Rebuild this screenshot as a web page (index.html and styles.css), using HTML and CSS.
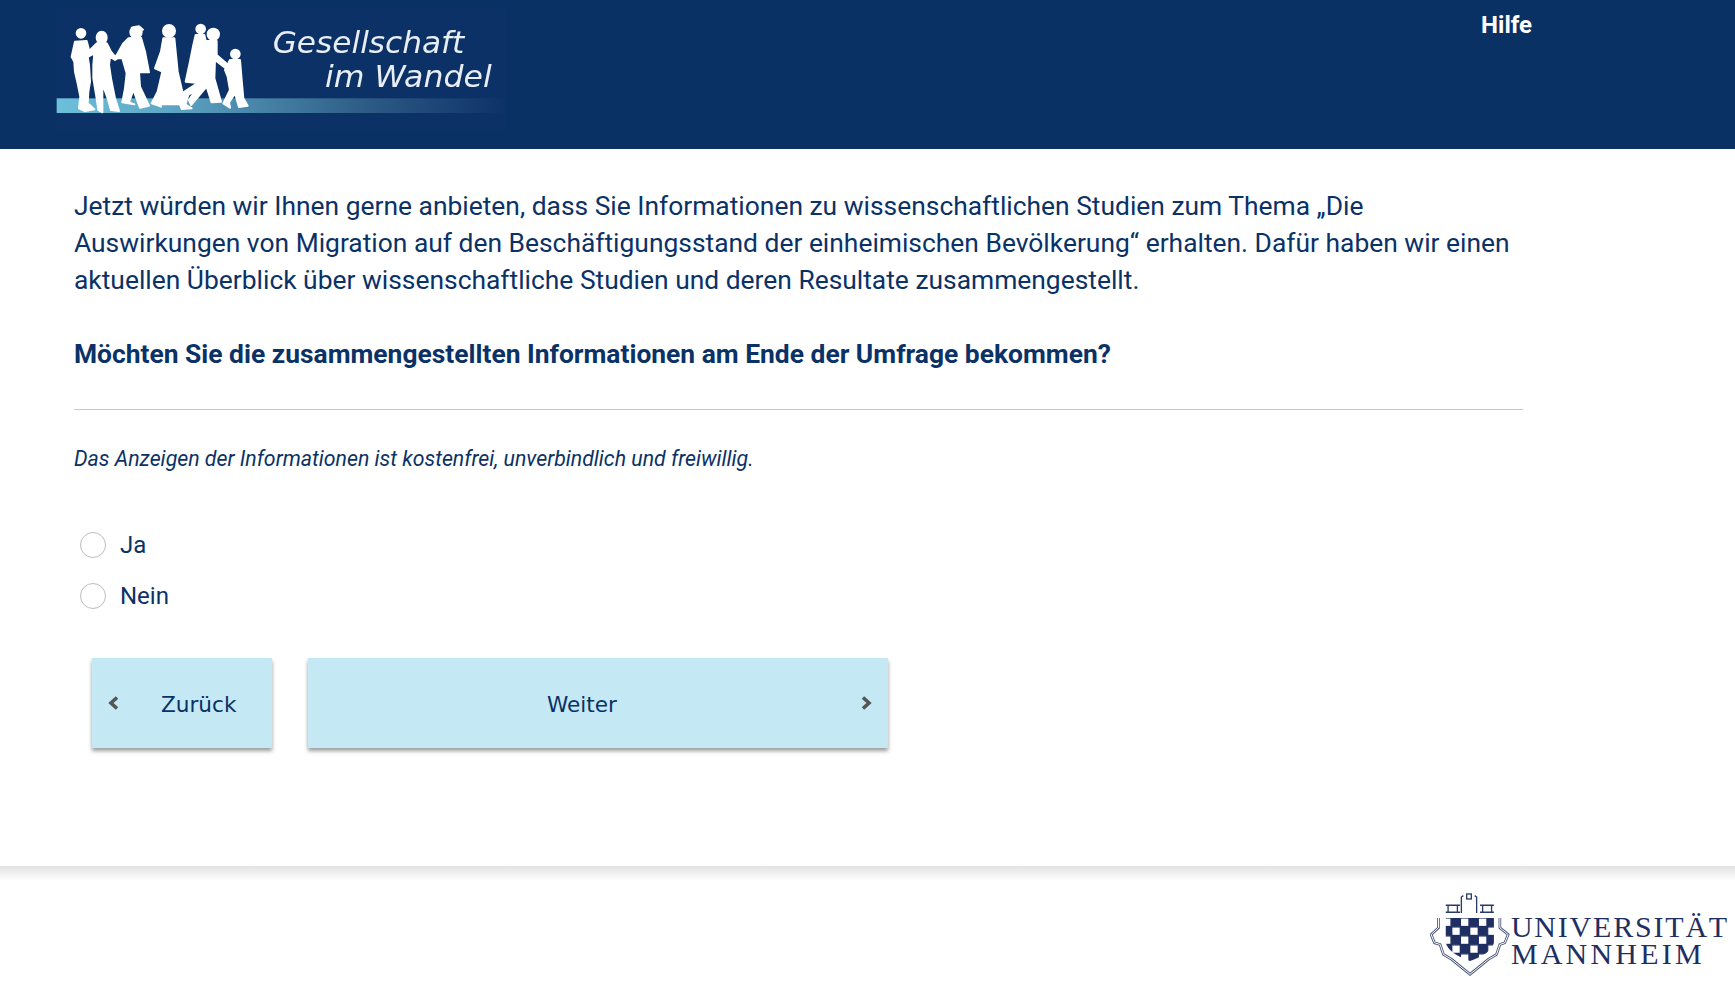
FILE: index.html
```html
<!DOCTYPE html>
<html lang="de">
<head>
    <meta charset="UTF-8">
    <meta name="viewport" content="width=device-width, initial-scale=1.0">
    <title>Gesellschaft im Wandel</title>
    <link rel="stylesheet" href="styles.css">
</head>
<body>
    <header class="top">
        <svg class="top-logo" viewBox="0 0 1440 447" aria-label="Gesellschaft im Wandel">
            <defs>
                <linearGradient id="bar" x1="0" x2="1" y1="0" y2="0">
                    <stop offset="0" stop-color="#6cc0dc"/>
                    <stop offset="0.25" stop-color="#5ea6c4"/>
                    <stop offset="0.7" stop-color="#2c5a85"/>
                    <stop offset="1" stop-color="#0e3268"/>
                </linearGradient>
                <filter id="soft"><feGaussianBlur stdDeviation="1.6"/></filter>
            </defs>
            <rect x="50" y="20" width="1350" height="370" fill="#0c3167"/>
            <rect x="50" y="295" width="1345" height="44" fill="url(#bar)"/>
            <g class="people" filter="url(#soft)" transform="translate(75 45)">
                <circle cx="48" cy="55" r="13"/>
                <path d="M30 80 L65 78 L72 105 L68 125 L72 150 L75 200 L70 230 L68 265 L88 283 L60 288 L42 280 L46 245 L38 205 L30 170 L28 140 L20 125 Z"/>
                <ellipse cx="110" cy="68" rx="15" ry="18"/>
                <path d="M95 85 L125 85 L138 110 L150 125 L165 112 L170 120 L150 135 L135 125 L132 150 L138 190 L150 250 L162 288 L138 285 L128 250 L112 205 L112 250 L112 292 L100 285 L95 250 L85 190 L85 150 L88 115 L70 125 L68 112 Z"/>
                <circle cx="213" cy="52" r="17"/>
                <path d="M200 38 L222 34 L234 44 L222 48 Z"/>
                <path d="M190 70 L228 68 L240 110 L252 172 L222 172 L225 215 L252 272 L225 278 L205 225 L192 262 L208 268 L172 262 L180 220 L185 175 L172 130 L150 130 L175 85 Z"/>
            </g>
            <g class="people" filter="url(#soft)" transform="translate(375 45)">
                <circle cx="12" cy="48" r="18"/>
                <path d="M-5 70 L28 70 L34 130 L38 170 L52 230 L55 265 L80 280 L50 282 L45 268 L-15 268 L-12 275 L-40 265 L-22 230 L-8 170 L-30 160 L-12 110 Z"/>
                <circle cx="107" cy="42" r="13"/>
                <circle cx="145" cy="58" r="17"/>
                <path d="M92 60 L118 60 L122 78 L155 78 L155 120 L190 150 L182 160 L150 135 L148 190 L168 260 L140 262 L125 215 L85 262 L78 270 L72 255 L105 205 L62 200 L75 140 L85 90 Z"/>
                <path d="M105 200 L55 232 L50 268 L60 272 L70 240 L115 210 Z"/>
                <circle cx="211" cy="117" r="13"/>
                <path d="M195 135 L225 135 L230 195 L235 250 L248 272 L222 276 L210 235 L192 262 L195 278 L175 265 L195 225 L188 185 L180 165 Z"/>
            </g>
            <text class="logo-text" x="698" y="160" textLength="575" lengthAdjust="spacingAndGlyphs">Gesellschaft</text>
            <text class="logo-text" x="855" y="262" textLength="500" lengthAdjust="spacingAndGlyphs">im Wandel</text>
        </svg>
        <a class="help" href="#">Hilfe</a>
    </header>

    <main class="survey">
        <p class="intro">Jetzt würden wir Ihnen gerne anbieten, dass Sie Informationen zu wissenschaftlichen Studien zum Thema „Die Auswirkungen von Migration auf den Beschäftigungsstand der einheimischen Bevölkerung“ erhalten. Dafür haben wir einen aktuellen Überblick über wissenschaftliche Studien und deren Resultate zusammengestellt.</p>
        <p class="question">Möchten Sie die zusammengestellten Informationen am Ende der Umfrage bekommen?</p>
        <hr class="rule">
        <p class="hint">Das Anzeigen der Informationen ist kostenfrei, unverbindlich und freiwillig.</p>
        <form class="answers">
            <label class="answer"><input type="radio" name="info" value="1"><span>Ja</span></label>
            <label class="answer"><input type="radio" name="info" value="2"><span>Nein</span></label>
            <div class="nav">
                <button type="button" class="nav-btn nav-back">
                    <svg class="chev" viewBox="0 0 12 14"><path d="M10 1.5 L4 7 L10 12.5"/></svg>
                    <span>Zurück</span>
                </button>
                <button type="button" class="nav-btn nav-next">
                    <span>Weiter</span>
                    <svg class="chev" viewBox="0 0 12 14"><path d="M2 1.5 L8 7 L2 12.5"/></svg>
                </button>
            </div>
        </form>
    </main>

    <footer class="bottom">
        <div class="uni">
            <svg class="uni-crest" viewBox="30 100 240 250">
                <defs>
                    <pattern id="checks" x="96" y="175" width="54" height="54" patternUnits="userSpaceOnUse">
                        <rect width="54" height="54" fill="#1f2f62"/>
                        <rect x="27" y="2" width="22" height="22" fill="#fff"/>
                        <rect x="1" y="29" width="22" height="22" fill="#fff"/>
                    </pattern>
                </defs>
                <!-- crown -->
                <path class="crest-line" d="M77 137 H120 M84 137 V158 M112 137 V158 M77 158 H120 M124 160 V112 L130 108 M170 160 V112 L164 108 M180 137 H222 M188 137 V158 M215 137 V158 M180 158 H222"/>
                <rect class="crest-line" x="140" y="103" width="14" height="15"/>
                <!-- outer wall, drawn twice for the double line -->
                <path class="crest-wall" d="M55 175 V205 L33 225 L43 250 L60 255 L70 285 L95 300 L150 345 L205 300 L230 285 L240 255 L255 250 L265 225 L240 205 V175"/>
                <path class="crest-wall crest-wall-in" d="M55 175 V205 L33 225 L43 250 L60 255 L70 285 L95 300 L150 345 L205 300 L230 285 L240 255 L255 250 L265 225 L240 205 V175"/>
                <path d="M77 175 H222 V250 Q215 282 150 305 Q85 282 77 250 Z" fill="url(#checks)"/>
            </svg>
            <div class="uni-name">
                <span class="uni-line">UNIVERSITÄT</span>
                <span class="uni-line uni-line-2">MANNHEIM</span>
            </div>
        </div>
    </footer>
</body>
</html>
```

FILE: styles.css
```css
html, body {margin: 0; height: 100%; overflow: hidden;}
body {
    display: flex;
    flex-direction: column;
    font-family: Roboto, "Liberation Sans", sans-serif;
    color: #0a3266;
    background: #fff;
}

/* top bar */
.top {
    display: flex;
    justify-content: space-between;
    height: 149px;
    flex: none;
    background: #0a3164;
}
.top-logo {width: 480px; height: 149px; margin-left: 40px;}
.people {fill: #fff; stroke: #fff; stroke-width: 6; stroke-linejoin: round;}
.logo-text {
    font-family: "DejaVu Sans", sans-serif;
    font-style: italic;
    font-size: 88px;
    fill: #e8eef3;
    filter: url(#soft);
}
.help {
    margin: 11px 203px 0 0;
    font-size: 24px;
    font-weight: 700;
    line-height: 28px;
    color: #fff;
    text-decoration: none;
}

/* question */
.survey {flex: 1; padding: 39px 0 0 74px; width: 1449px;}
.survey p {margin: 0;}
.intro {font-size: 26.4px; line-height: 37px;}
.survey .question {margin-top: 37px; font-size: 26.4px; line-height: 37px; font-weight: 700;}
.rule {margin: 36px 0 0; border: 0; border-top: 1px solid #c4c8cc;}
.survey .hint {margin-top: 36px; font-size: 21.3px; line-height: 26px; font-style: italic;}

/* answers */
.answers {margin-top: 47px;}
.answer {display: flex; align-items: center; height: 51px; font-size: 24px; cursor: pointer;}
.answer input {
    appearance: none;
    width: 26px;
    height: 26px;
    margin: 0 14px 0 6px;
    border: 1px solid #bdbdbd;
    border-radius: 50%;
    background: #fff;
}
.nav {display: flex; gap: 36px; margin: 37px 0 0 18px;}
.nav-btn {
    display: flex;
    align-items: center;
    height: 90px;
    padding: 0 15px;
    border: 0;
    background: #c5e8f5;
    box-shadow: 0 3px 4px rgba(0, 0, 0, 0.4);
    font-family: "DejaVu Sans", sans-serif;
    font-size: 21.6px;
    color: #0a3266;
}
.nav-btn span {padding-top: 2px;}
.nav-back {width: 180px;}
.nav-back span {margin-left: 42px;}
.nav-next {width: 580px; justify-content: space-between;}
.nav-next span {margin-left: 224px;}
.chev {width: 12px; height: 14px; fill: none; stroke: #555; stroke-width: 3.6;}

/* footer */
.bottom {
    display: flex;
    justify-content: flex-end;
    height: 115px;
    flex: none;
    background: linear-gradient(#e2e2e2, #fff 15px);
}
.uni {display: flex; align-items: flex-start; gap: 1px; margin: 27px 6px 0 0;}
.uni-crest {width: 80px; height: 83px;}
.uni-crest .crest-line {fill: none; stroke: #2b3a68; stroke-width: 4;}
.uni-crest .crest-wall {fill: none; stroke: #4a5578; stroke-width: 8;}
.uni-crest .crest-wall-in {stroke: #fff; stroke-width: 3;}
.uni-name {
    display: flex;
    flex-direction: column;
    margin-top: 20px;
    font-family: "Liberation Serif", serif;
    font-size: 30px;
    line-height: 27px;
    color: #1f2f62;
}
.uni-line {letter-spacing: 1.8px; white-space: nowrap;}
.uni-line-2 {letter-spacing: 3.2px;}
```
